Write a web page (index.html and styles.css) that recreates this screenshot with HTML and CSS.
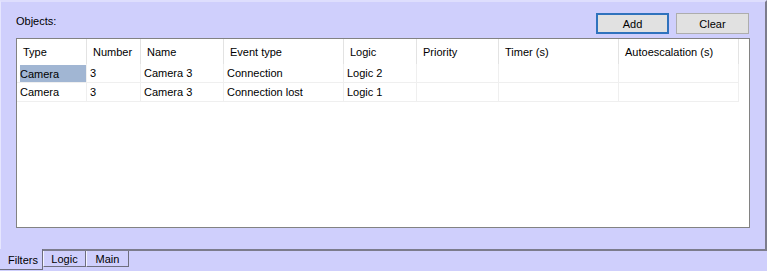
FILE: index.html
```html
<!DOCTYPE html>
<html lang="en">
<head>
    <meta charset="UTF-8">
    <title>Objects</title>
    <link rel="stylesheet" href="styles.css">
</head>
<body>

<div class="panel">
    <div class="toolbar">
        <span class="label">Objects:</span>
        <div class="buttons">
            <button class="btn btn-default">Add</button>
            <button class="btn">Clear</button>
        </div>
    </div>

    <div class="list">
        <div class="grid">
            <div class="head">Type</div>
            <div class="head">Number</div>
            <div class="head">Name</div>
            <div class="head">Event type</div>
            <div class="head">Logic</div>
            <div class="head">Priority</div>
            <div class="head">Timer (s)</div>
            <div class="head">Autoescalation (s)</div>

            <div class="cell"><span class="selected">Camera</span></div>
            <div class="cell">3</div>
            <div class="cell">Camera 3</div>
            <div class="cell">Connection</div>
            <div class="cell">Logic 2</div>
            <div class="cell"></div>
            <div class="cell"></div>
            <div class="cell"></div>

            <div class="cell">Camera</div>
            <div class="cell">3</div>
            <div class="cell">Camera 3</div>
            <div class="cell">Connection lost</div>
            <div class="cell">Logic 1</div>
            <div class="cell"></div>
            <div class="cell"></div>
            <div class="cell"></div>
        </div>
    </div>
</div>

<div class="tabs">
    <div class="tab active">Filters</div>
    <div class="tab">Logic</div>
    <div class="tab">Main</div>
</div>

</body>
</html>
```

FILE: styles.css
```css
body {
    margin: 0;
    background-color: #cfcffc;
    font-family: "Liberation Sans", Arial, sans-serif;
    font-size: 11px;
    color: #000;
}

.panel {
    box-sizing: border-box;
    width: 767px;
    height: 251px;
    padding: 11px 14px 0 15px;
    border-top: 2px solid #dedefd;
    border-left: 1px solid #e6e6fe;
    border-right: 2px solid #7c7c8c;
    border-bottom: 2px solid #7c7c8c;
}

.toolbar {
    display: flex;
    justify-content: space-between;
    align-items: flex-start;
    height: 25px;
    padding-right: 2px;
}

.label {
    margin-top: 2px;
}

.buttons {
    display: flex;
    gap: 7px;
}

.btn {
    box-sizing: border-box;
    width: 73px;
    height: 21px;
    background-color: #e1e1e1;
    border: 1px solid #adadad;
    font-family: "Liberation Sans", Arial, sans-serif;
    font-size: 11px;
    color: #000;
    padding: 0;
}

.btn-default {
    border: 2px solid #2f72bd;
}

.list {
    box-sizing: border-box;
    width: 734px;
    height: 190px;
    background-color: #fff;
    border: 1px solid #828282;
}

.grid {
    display: grid;
    grid-template-columns: 70px 54px 83px 120px 73px 82px 120px 120px;
    grid-template-rows: 25px 19px 19px;
}

.head {
    box-sizing: border-box;
    display: flex;
    align-items: center;
    padding-left: 6px;
    border-right: 1px solid #e3e3e3;
}

.cell {
    box-sizing: border-box;
    display: flex;
    align-items: center;
    padding-left: 3px;
    border-right: 1px solid #efefef;
    border-bottom: 1px solid #efefef;
}

.selected {
    display: flex;
    align-items: center;
    align-self: stretch;
    flex: 1;
    margin-top: 1px;
    background-color: #a1b6d3;
}

.tabs {
    display: flex;
    align-items: flex-start;
}

.tab {
    box-sizing: border-box;
    width: 43px;
    height: 16px;
    padding-top: 2px;
    text-align: center;
    border-left: 1px solid #f4f4ff;
    border-right: 1px solid #6e6e7e;
    border-bottom: 1px solid #6e6e7e;
}

.tab.active {
    height: 21px;
    margin-top: -2px;
    padding: 5px 0 0 8px;
    text-align: left;
    border-left: none;
    background-color: #cfcffc;
}
```
